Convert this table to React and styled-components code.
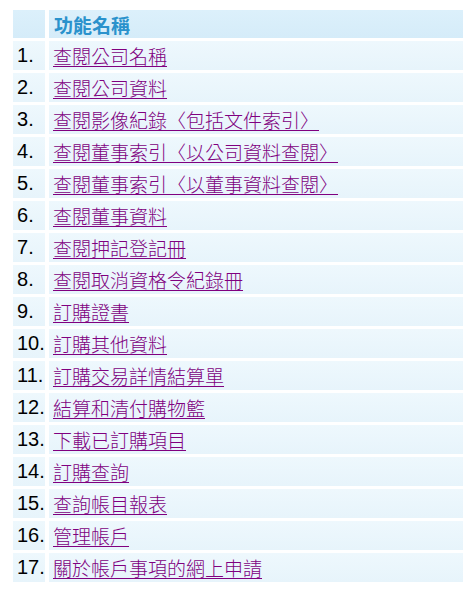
import React from "react";
import styled, { createGlobalStyle } from "styled-components";

const Global = createGlobalStyle`
  html, body { margin: 0; padding: 0; background: #ffffff; overflow: hidden; }
  body { font-family: "Liberation Sans", Arial, "Noto Sans CJK TC", sans-serif; }
`;

const Page = styled.div`
  padding: 10px 0 0 13px;
  width: 463px;
  box-sizing: border-box;
  overflow: hidden;
`;

const Grid = styled.div`
  display: grid;
  grid-template-columns: 32px 1fr;
  column-gap: 4px;
  row-gap: 3px;
`;

const HeadCell = styled.div`
  height: 28px;
  background: linear-gradient(#dcf0fb, #d5ecf9);
  display: flex;
  align-items: center;
  padding-left: 5px;
  font-family: "Noto Sans CJK TC", sans-serif;
  font-weight: bold;
  font-size: 19px;
  color: #2a92cc;
`;

const Cell = styled.div`
  height: 29px;
  background: linear-gradient(#eef8fd, #e7f4fb);
  display: flex;
  align-items: center;
  padding-left: 4px;
  box-sizing: border-box;
  overflow: hidden;
`;

const Num = styled.span`
  font-family: "Liberation Sans", Arial, sans-serif;
  font-size: 20px;
  color: #000000;
`;

const Link = styled.a`
  font-family: "Noto Sans CJK TC", sans-serif;
  font-weight: 300;
  font-size: 19px;
  color: #800080;
  text-decoration: underline;
  text-underline-offset: 2px;
  text-decoration-thickness: 1px;
  line-height: 1;
  white-space: nowrap;
`;

const items = [
  "查閱公司名稱",
  "查閱公司資料",
  "查閱影像紀錄〈包括文件索引〉",
  "查閱董事索引〈以公司資料查閱〉",
  "查閱董事索引〈以董事資料查閱〉",
  "查閱董事資料",
  "查閱押記登記冊",
  "查閱取消資格令紀錄冊",
  "訂購證書",
  "訂購其他資料",
  "訂購交易詳情結算單",
  "結算和清付購物籃",
  "下載已訂購項目",
  "訂購查詢",
  "查詢帳目報表",
  "管理帳戶",
  "關於帳戶事項的網上申請",
];

export default function App() {
  return (
    <>
      <Global />
      <Page>
        <Grid>
          <HeadCell />
          <HeadCell>功能名稱</HeadCell>
          {items.map((t, i) => (
            <React.Fragment key={i}>
              <Cell>
                <Num>{i + 1}.</Num>
              </Cell>
              <Cell>
                <Link href="#">{t}</Link>
              </Cell>
            </React.Fragment>
          ))}
        </Grid>
      </Page>
    </>
  );
}
